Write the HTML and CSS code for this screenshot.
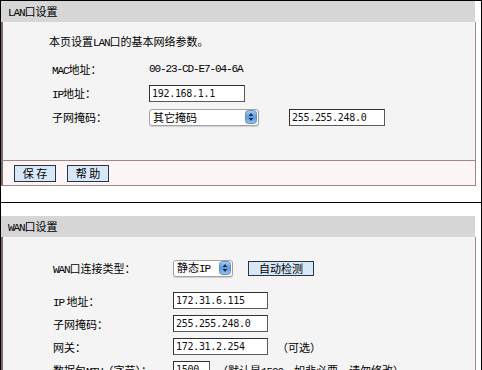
FILE: index.html
```html
<!DOCTYPE html>
<html lang="zh-CN">
<head>
<meta charset="utf-8">
<title>LAN / WAN 设置</title>
<link rel="stylesheet" href="styles.css">
</head>
<body>
<div class="frame first">
  <div class="hdr"><span class="en">LAN</span>口设置</div>
  <div class="panel lan">
    <p class="intro">本页设置<span class="en">LAN</span>口的基本网络参数。</p>
    <div class="form lanform">
      <div class="lbl"><span class="en">MAC</span>地址：</div>
      <div class="val en">00-23-CD-E7-04-6A</div>
      <div class="lbl"><span class="en">IP</span>地址：</div>
      <div class="cell"><span class="inp w96">192.168.1.1</span></div>
      <div class="lbl">子网掩码：</div>
      <div class="cell gap30">
        <span class="sel w110"><span class="seltxt">其它掩码</span><svg class="spin" viewBox="0 0 12 14" width="12" height="14"><defs><linearGradient id="g1" x1="0" y1="0" x2="0" y2="1"><stop offset="0" stop-color="#a9cdf3"/><stop offset="0.5" stop-color="#5c9be0"/><stop offset="1" stop-color="#8fc0f0"/></linearGradient></defs><rect x="0.5" y="0.5" width="11" height="13" rx="3" fill="url(#g1)" stroke="#6d8fb5"/><path d="M6 3 L8.3 6 L3.7 6 Z" fill="#1b2b40"/><path d="M6 11 L8.3 8 L3.7 8 Z" fill="#1b2b40"/></svg></span>
        <span class="inp w96">255.255.248.0</span>
      </div>
    </div>
  </div>
  <div class="bar">
    <span class="btn">保 存</span>
    <span class="btn">帮 助</span>
  </div>
</div>
<div class="frame second">
  <div class="hdr"><span class="en">WAN</span>口设置</div>
  <div class="panel wan">
    <div class="form wanform toprow">
      <div class="lbl"><span class="en">WAN</span>口连接类型：</div>
      <div class="cell gap14">
        <span class="sel w60"><span class="seltxt">静态<span class="en">IP</span></span><svg class="spin" viewBox="0 0 12 14" width="12" height="14"><defs><linearGradient id="g2" x1="0" y1="0" x2="0" y2="1"><stop offset="0" stop-color="#a9cdf3"/><stop offset="0.5" stop-color="#5c9be0"/><stop offset="1" stop-color="#8fc0f0"/></linearGradient></defs><rect x="0.5" y="0.5" width="11" height="13" rx="3" fill="url(#g2)" stroke="#6d8fb5"/><path d="M6 3 L8.3 6 L3.7 6 Z" fill="#1b2b40"/><path d="M6 11 L8.3 8 L3.7 8 Z" fill="#1b2b40"/></svg></span>
        <span class="btn wide">自动检测</span>
      </div>
    </div>
    <div class="form wanform">
      <div class="lbl"><span class="en">IP</span> 地址：</div>
      <div class="cell"><span class="inp w95">172.31.6.115</span></div>
      <div class="lbl">子网掩码：</div>
      <div class="cell"><span class="inp w95">255.255.248.0</span></div>
      <div class="lbl">网关：</div>
      <div class="cell gap9"><span class="inp w95">172.31.2.254</span><span class="note">（可选）</span></div>
      <div class="lbl">数据包<span class="en">MTU</span>（字节）：</div>
      <div class="cell gap7"><span class="inp w37">1500</span><span class="note">（默认是<span class="en">1500</span>，如非必要，请勿修改）</span></div>
    </div>
  </div>
</div>
</body>
</html>
```
FILE: styles.css
```css
html, body {
  margin: 0;
  padding: 0;
  background: #ffffff;
}
body {
  width: 482px;
  height: 370px;
  overflow: hidden;
  font-family: "Noto Sans CJK SC", "Noto Sans", sans-serif;
  font-size: 11px;
  color: #000;
}
.en {
  font-family: "Liberation Mono", monospace;
  font-size: 11px;
  letter-spacing: -1.1px;
}
.frame {
  border-left: 1px solid #000;
  border-right: 1px solid #000;
  border-top: 1px solid #000;
}
.frame.first {
  height: 201px;
}
.frame.second {
  padding-top: 13px;
  height: 200px;
}
.hdr {
  height: 21px;
  line-height: 20px;
  background: #d6d6d6;
  margin-right: 6px;
  padding-left: 7px;
}
.panel {
  background: #f4f4f4;
  border-left: 2px solid #7d6a6a;
  border-right: 1px solid #a48686;
  margin-right: 5px;
}
.panel.lan {
  height: 126px;
  padding-top: 12px;
  padding-left: 49px;
  border-bottom: 1px solid #a48686;
}
.intro {
  margin: 0 0 7px -3px;
  line-height: 14px;
}
.form {
  display: grid;
  align-items: center;
}
.lanform {
  grid-template-columns: 97px auto;
  grid-auto-rows: 24px;
}
.wanform {
  grid-template-columns: 120px auto;
  grid-auto-rows: 23px;
}
.wanform.toprow {
  grid-auto-rows: 24px;
  margin-bottom: 9px;
}
.panel.wan {
  padding-top: 19px;
  padding-left: 50px;
  height: 200px;
}
.lbl {
  white-space: nowrap;
}
.cell {
  display: flex;
  align-items: center;
}
.gap30 { gap: 30px; }
.gap14 { gap: 15px; }
.gap9 { gap: 9px; }
.gap7 { gap: 7px; }
.inp {
  display: inline-block;
  box-sizing: border-box;
  height: 17px;
  line-height: 15px;
  padding-left: 2px;
  background: #fff;
  border: 1px solid #5a5a5a;
  border-top-color: #303030;
  border-left-color: #303030;
  font-family: "DejaVu Sans Mono", monospace;
  font-size: 10px;
  letter-spacing: -0.3px;
  color: #111;
}
.w96 { width: 96px; }
.w95 { width: 95px; }
.w37 { width: 37px; }
.sel {
  display: inline-flex;
  align-items: center;
  justify-content: space-between;
  box-sizing: border-box;
  height: 17px;
  padding: 0 1px 0 3px;
  background: #fff;
  border: 1px solid #a2a2a2;
  border-radius: 3px;
  box-shadow: 0 1px 1px rgba(0,0,0,0.15);
}
.w110 { width: 110px; }
.w60 { width: 60px; }
.seltxt {
  line-height: 15px;
}
.spin {
  display: block;
}
.bar {
  height: 24px;
  background: #fbf5f5;
  border-left: 2px solid #7d6a6a;
  border-right: 1px solid #a48686;
  border-bottom: 1px solid #a48686;
  margin-right: 5px;
  display: flex;
  align-items: center;
  gap: 11px;
  padding-left: 11px;
}
.btn {
  display: inline-flex;
  align-items: center;
  justify-content: center;
  box-sizing: border-box;
  width: 42px;
  height: 17px;
  background: #d8e7f6;
  border: 1px solid #26364a;
  font-size: 11px;
  line-height: 15px;
  white-space: pre;
}
.btn.wide {
  width: 66px;
  height: 15px;
  line-height: 13px;
}
.note {
  white-space: nowrap;
}
```
